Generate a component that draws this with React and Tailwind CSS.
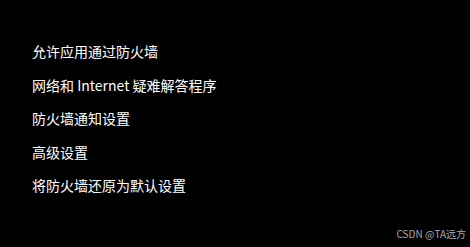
import React from 'react';

const links = [
    "允许应用通过防火墙",
    "网络和 Internet 疑难解答程序",
    "防火墙通知设置",
    "高级设置",
    "将防火墙还原为默认设置",
];

function App() {
    return (
        <div
            className="relative w-[470px] h-[247px] bg-black overflow-hidden"
            style={{ fontFamily: '"Noto Sans CJK SC", "Liberation Sans", sans-serif' }}
        >
            <ul className="flex flex-col gap-[14px] pl-[32px] pt-[42px]">
                {links.map((text) => (
                    <li key={text} className="text-[14px] leading-[19.5px] text-white">
                        {text}
                    </li>
                ))}
            </ul>
            <span className="absolute right-[4px] bottom-[6px] text-[10px] leading-[14px] text-[#aaaaaa]">
                CSDN @TA远方
            </span>
        </div>
    );
}

export default App;
